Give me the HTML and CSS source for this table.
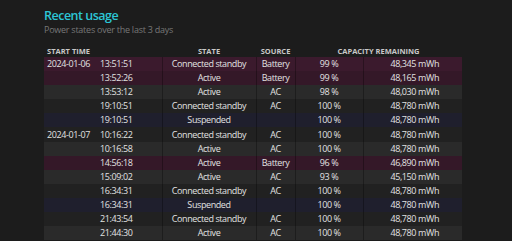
FILE: index.html
```html
<!DOCTYPE html>
<html>
<head>
<meta charset="utf-8">
<link rel="stylesheet" href="styles.css">
</head>
<body>
<div class="page">
  <h2 class="title">Recent usage</h2>
  <div class="subtitle">Power states over the last 3 days</div>
  <table class="usage">
    <colgroup>
      <col class="c-dt"><col class="c-state"><col class="c-src"><col class="c-pct"><col class="c-mwh">
    </colgroup>
    <thead>
      <tr>
        <th class="h-left">START TIME</th>
        <th>STATE</th>
        <th>SOURCE</th>
        <th colspan="2">CAPACITY REMAINING</th>
      </tr>
    </thead>
    <tbody>
      <tr class="dc odd"><td class="dt"><span class="date">2024-01-06</span><span class="time">13:51:51</span></td><td class="state">Connected standby</td><td class="src">Battery</td><td class="pct">99 %</td><td class="mwh">48,345 mWh</td></tr>
      <tr class="dc even"><td class="dt"><span class="date"></span><span class="time">13:52:26</span></td><td class="state">Active</td><td class="src">Battery</td><td class="pct">99 %</td><td class="mwh">48,165 mWh</td></tr>
      <tr class="ac odd"><td class="dt"><span class="date"></span><span class="time">13:53:12</span></td><td class="state">Active</td><td class="src">AC</td><td class="pct">98 %</td><td class="mwh">48,030 mWh</td></tr>
      <tr class="ac even"><td class="dt"><span class="date"></span><span class="time">19:10:51</span></td><td class="state">Connected standby</td><td class="src">AC</td><td class="pct">100 %</td><td class="mwh">48,780 mWh</td></tr>
      <tr class="susp odd"><td class="dt"><span class="date"></span><span class="time">19:10:51</span></td><td class="state">Suspended</td><td class="src"></td><td class="pct">100 %</td><td class="mwh">48,780 mWh</td></tr>
      <tr class="ac even"><td class="dt"><span class="date">2024-01-07</span><span class="time">10:16:22</span></td><td class="state">Connected standby</td><td class="src">AC</td><td class="pct">100 %</td><td class="mwh">48,780 mWh</td></tr>
      <tr class="ac odd"><td class="dt"><span class="date"></span><span class="time">10:16:58</span></td><td class="state">Active</td><td class="src">AC</td><td class="pct">100 %</td><td class="mwh">48,780 mWh</td></tr>
      <tr class="dc even"><td class="dt"><span class="date"></span><span class="time">14:56:18</span></td><td class="state">Active</td><td class="src">Battery</td><td class="pct">96 %</td><td class="mwh">46,890 mWh</td></tr>
      <tr class="ac odd"><td class="dt"><span class="date"></span><span class="time">15:09:02</span></td><td class="state">Active</td><td class="src">AC</td><td class="pct">93 %</td><td class="mwh">45,150 mWh</td></tr>
      <tr class="ac even"><td class="dt"><span class="date"></span><span class="time">16:34:31</span></td><td class="state">Connected standby</td><td class="src">AC</td><td class="pct">100 %</td><td class="mwh">48,780 mWh</td></tr>
      <tr class="susp odd"><td class="dt"><span class="date"></span><span class="time">16:34:31</span></td><td class="state">Suspended</td><td class="src"></td><td class="pct">100 %</td><td class="mwh">48,780 mWh</td></tr>
      <tr class="ac even"><td class="dt"><span class="date"></span><span class="time">21:43:54</span></td><td class="state">Connected standby</td><td class="src">AC</td><td class="pct">100 %</td><td class="mwh">48,780 mWh</td></tr>
      <tr class="ac odd"><td class="dt"><span class="date"></span><span class="time">21:44:30</span></td><td class="state">Active</td><td class="src">AC</td><td class="pct">100 %</td><td class="mwh">48,780 mWh</td></tr>
    </tbody>
  </table>
</div>
</body>
</html>
```
FILE: styles.css
```css
html, body {
  margin: 0;
  padding: 0;
  background: #1c1c1c;
  overflow: hidden;
}
.page {
  padding: 7px 0 0 44px;
  font-family: "Open Sans", "Noto Sans", sans-serif;
  color: #e2e2e2;
}
.title {
  margin: 0;
  font-size: 12.5px;
  letter-spacing: -0.5px;
  line-height: 17px;
  font-weight: 600;
  color: #2cc6d6;
}
.subtitle {
  font-size: 9px;
  letter-spacing: -0.25px;
  line-height: 12px;
  color: #777;
  margin-bottom: 9px;
}
.usage {
  border-collapse: collapse;
  table-layout: fixed;
  width: 418px;
  font-size: 9px;
  letter-spacing: -0.4px;
}
.c-dt { width: 118px; }
.c-state { width: 94px; }
.c-src { width: 39px; }
.c-pct { width: 68px; }
.c-mwh { width: 99px; }
.usage th {
  font-size: 7.5px;
  letter-spacing: 0;
  font-weight: 700;
  color: #c8c8c8;
  height: 12px;
  line-height: 12px;
  padding: 0;
  text-align: center;
  white-space: nowrap;
}
.usage th.h-left {
  text-align: left;
  padding-left: 3px;
}
.usage td {
  height: 14.1px;
  line-height: 10px;
  padding: 0;
  vertical-align: middle;
  white-space: nowrap;
  text-align: center;
  border-left: 1px solid rgba(0, 0, 0, 0.3);
}
.usage td:first-child {
  border-left: none;
}
.dt {
  text-align: left !important;
  padding-left: 3px !important;
}
.date {
  display: inline-block;
  width: 53px;
}
.mwh {
  text-align: right !important;
  padding-right: 23px !important;
}
.dc.odd { background: #3b1a2d; }
.dc.even { background: #341828; }
.ac.odd { background: #2a2a2a; }
.ac.even { background: #212121; }
.susp.odd { background: #1f1f2d; }
```
